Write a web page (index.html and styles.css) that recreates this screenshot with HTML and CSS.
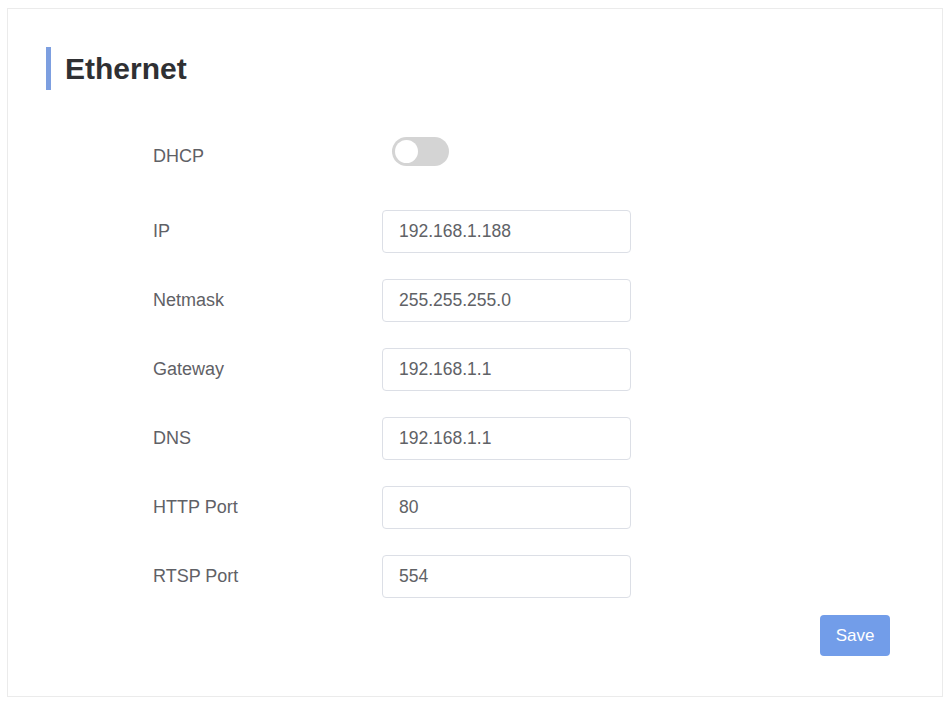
FILE: index.html
```html
<!DOCTYPE html>
<html lang="en">
<head>
    <meta charset="UTF-8">
    <meta name="viewport" content="width=device-width, initial-scale=1.0">
    <title>Ethernet</title>
    <link rel="stylesheet" href="styles.css">
</head>
<body>
    <!-- Ethernet settings card -->
    <div class="card">
        <h2 class="section-title">Ethernet</h2>

        <form class="settings-form" onsubmit="return false">
            <div class="form-row switch-row">
                <label>DHCP</label>
                <span class="switch"><span class="knob"></span></span>
            </div>
            <div class="form-row">
                <label>IP</label>
                <input type="text" value="192.168.1.188">
            </div>
            <div class="form-row">
                <label>Netmask</label>
                <input type="text" value="255.255.255.0">
            </div>
            <div class="form-row">
                <label>Gateway</label>
                <input type="text" value="192.168.1.1">
            </div>
            <div class="form-row">
                <label>DNS</label>
                <input type="text" value="192.168.1.1">
            </div>
            <div class="form-row">
                <label>HTTP Port</label>
                <input type="text" value="80">
            </div>
            <div class="form-row">
                <label>RTSP Port</label>
                <input type="text" value="554">
            </div>

            <div class="form-actions">
                <button type="submit" class="save-btn">Save</button>
            </div>
        </form>
    </div>
</body>
</html>
```

FILE: styles.css
```css
/* General Styles */
html, body {
    height: 100%;
}

body {
    font-family: "Liberation Sans", Arial, sans-serif;
    background: #ffffff;
    margin: 0;
    padding: 8px 5px 4px 7px;
    box-sizing: border-box;
}

.card {
    height: 100%;
    box-sizing: border-box;
    border: 1px solid #ebebeb;
    padding: 38px 52px 0 38px;
}

/* Title */
.section-title {
    margin: 0;
    height: 43px;
    display: flex;
    align-items: center;
    border-left: 5px solid #7d9fe0;
    padding-left: 14px;
    font-size: 30px;
    font-weight: bold;
    color: #2f3033;
}

/* Form */
.settings-form {
    margin-top: 40px;
    padding-left: 107px;
}

.form-row {
    display: flex;
    align-items: center;
    height: 43px;
    margin-bottom: 26px;
}

.form-row.switch-row {
    margin-bottom: 37px;
}

.form-row label {
    width: 229px;
    font-size: 18px;
    color: #5f6166;
}

.switch-row label {
    margin-top: 9px;
}

.form-row input {
    width: 249px;
    height: 43px;
    box-sizing: border-box;
    border: 1px solid #dcdfe6;
    border-radius: 4px;
    padding: 0 16px;
    font-family: "Liberation Sans", Arial, sans-serif;
    font-size: 17.5px;
    color: #606266;
    outline: none;
}

/* Toggle switch */
.switch {
    width: 57px;
    height: 29px;
    margin-left: 10px;
    border-radius: 15px;
    background: #d4d4d4;
    display: flex;
    align-items: center;
    padding: 0 3px;
    box-sizing: border-box;
}

.switch .knob {
    width: 23px;
    height: 23px;
    border-radius: 50%;
    background: #ffffff;
}

/* Actions */
.form-actions {
    display: flex;
    justify-content: flex-end;
    margin-top: -9px;
}

.save-btn {
    width: 70px;
    height: 41px;
    background-color: #729de9;
    color: white;
    border: none;
    border-radius: 4px;
    font-family: "Liberation Sans", Arial, sans-serif;
    font-size: 17px;
    cursor: pointer;
}

.save-btn:hover {
    background-color: #5f8ee3;
}
```
